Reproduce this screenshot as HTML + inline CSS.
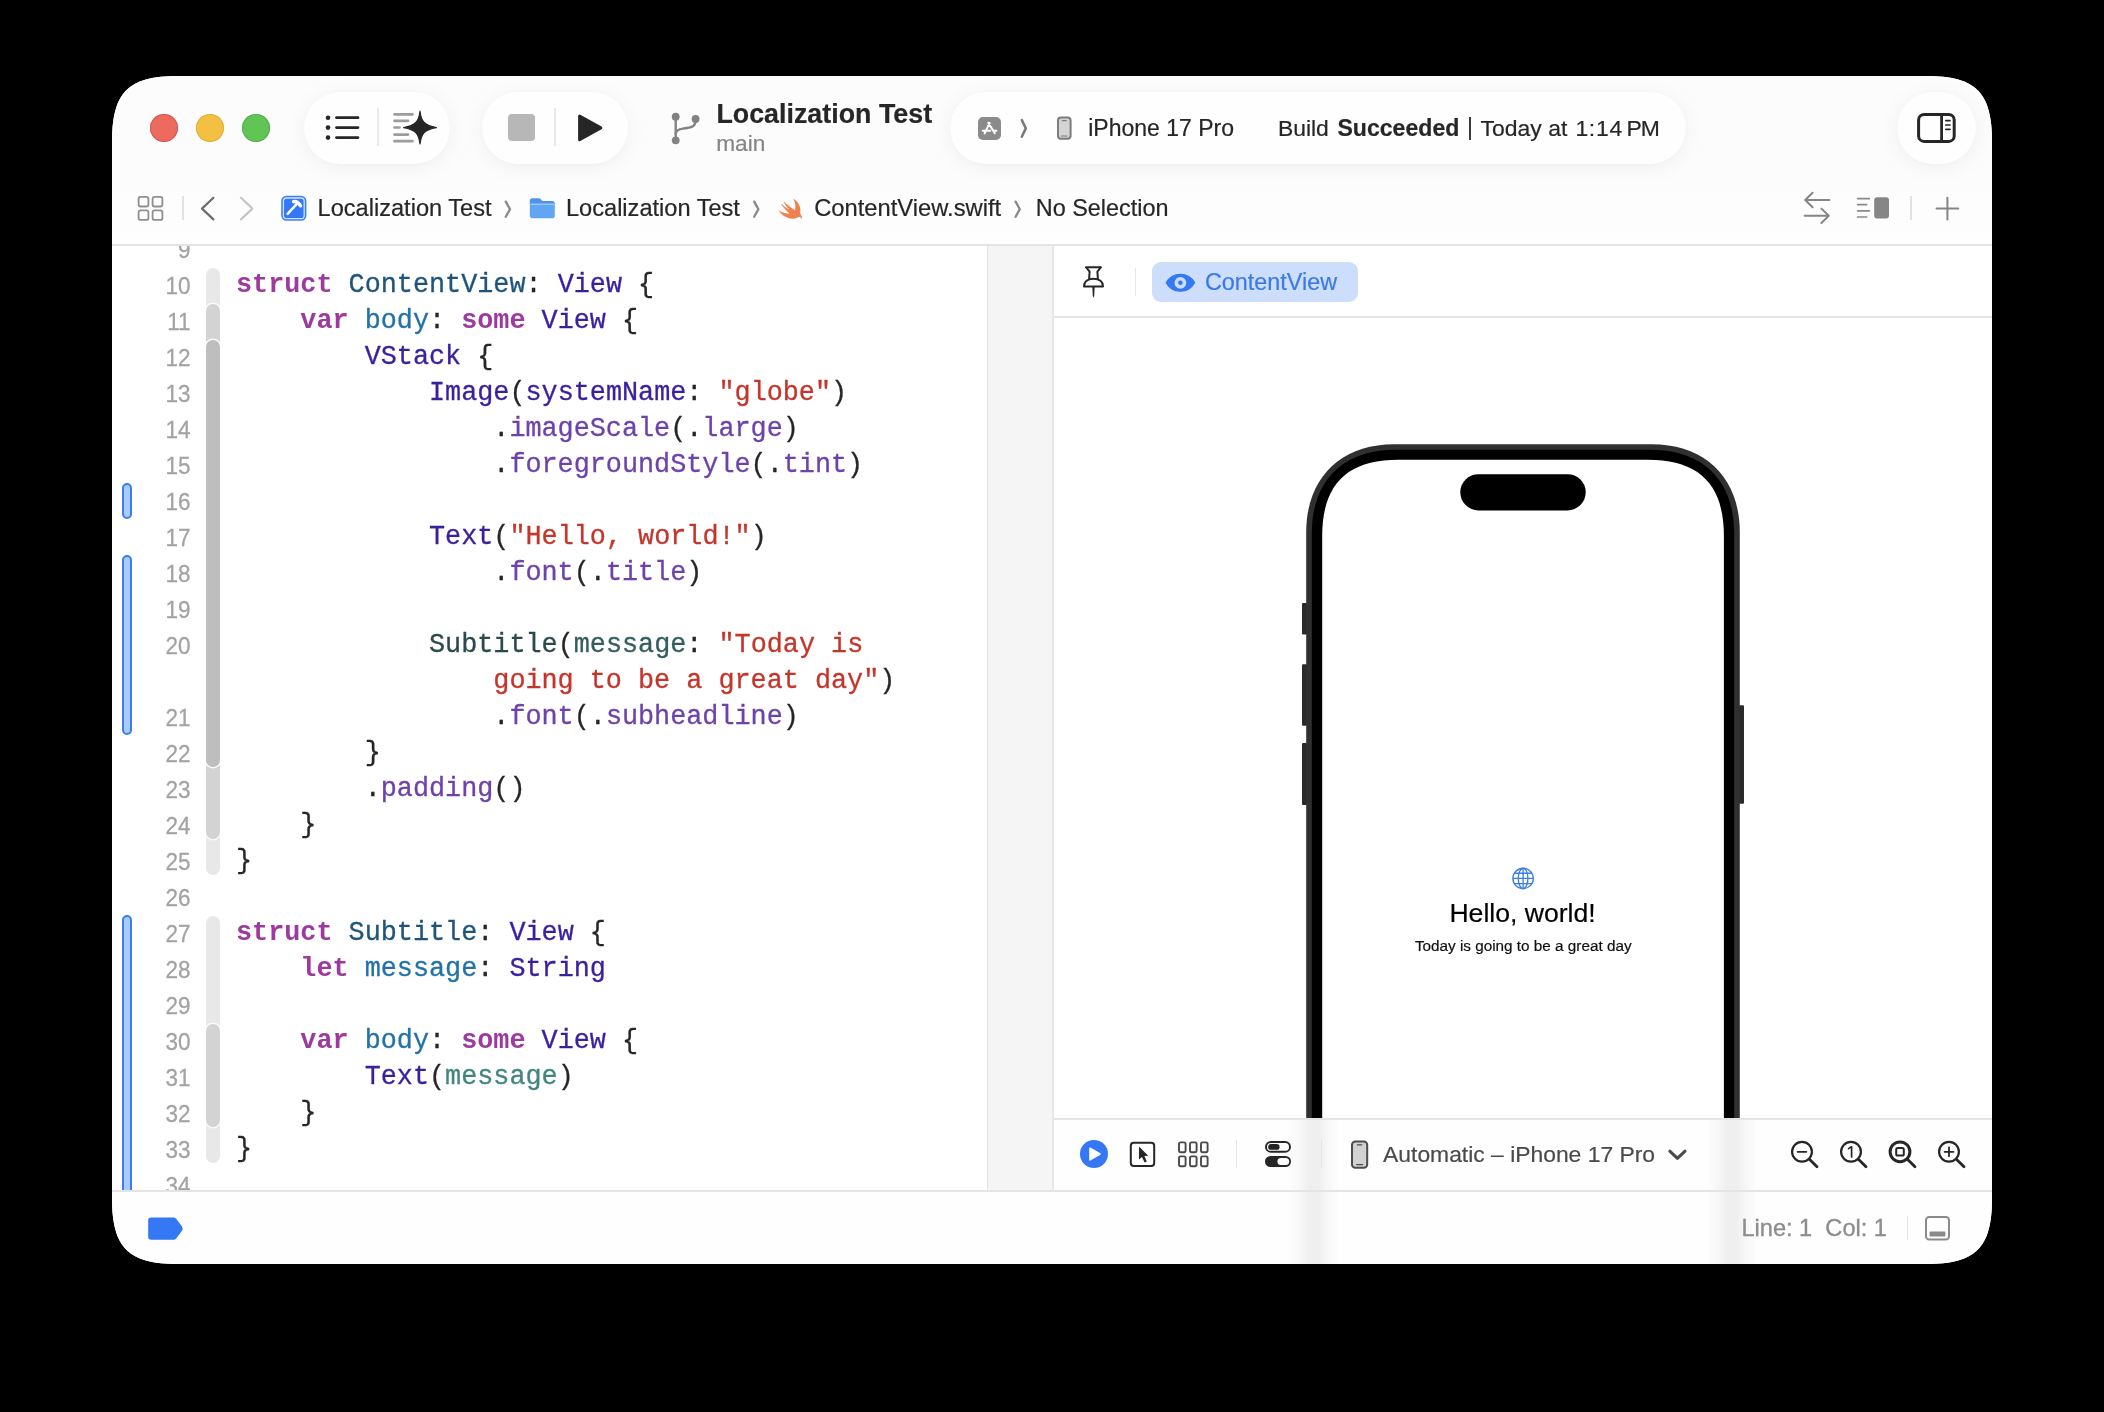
<!DOCTYPE html>
<html>
<head>
<meta charset="utf-8">
<title>Xcode</title>
<style>
html,body{margin:0;padding:0;background:#000;}
body{width:2104px;height:1412px;overflow:hidden;position:relative;font-family:"Liberation Sans",sans-serif;}
.win{position:absolute;left:112px;top:76px;width:1880px;height:1188px;background:#fff;overflow:hidden;clip-path:path('M0 66 C0 16.1 16.1 0 66 0 L1814 0 C1863.9 0 1880 16.1 1880 66 L1880 1122 C1880 1171.9 1863.9 1188 1814 1188 L66 1188 C16.1 1188 0 1171.9 0 1122Z');}
.pg{position:absolute;left:-112px;top:-76px;width:2104px;height:1412px;will-change:transform;}
.pg *{position:absolute;box-sizing:border-box;}
.t{white-space:pre;line-height:30px;height:30px;font-size:23px;color:#262626;-webkit-text-stroke:0.2px currentColor;}
.pill{background:#fefefe;border-radius:36px;box-shadow:0 3px 22px rgba(0,0,0,0.055),0 1px 5px rgba(0,0,0,0.015);}
.vd{width:1.6px;background:#e4e4e4;}
.hl{height:1px;background:#e3e3e3;}
svg{overflow:visible;}
/* code */
.code{left:236px;height:36px;font-family:"Liberation Mono",monospace;font-size:26.8px;line-height:36px;white-space:pre;color:#262626;-webkit-text-stroke:0.3px currentColor;}
.code span{position:static;}
.k{color:#9d3a9e;font-weight:bold;-webkit-text-stroke:0;}
.td{color:#1f557c;}
.od{color:#2272a8;}
.st{color:#3a1f9e;}
.sf{color:#6e42ad;}
.pt{color:#2a4a4d;}
.pp{color:#428580;}
.pp2{color:#335e60;}
.s{color:#c4352a;}
.ln{left:120px;width:70.6px;height:36px;text-align:right;font-size:24.6px;line-height:36px;color:#a3a3a3;-webkit-text-stroke:0.3px #a3a3a3;white-space:pre;transform:scaleX(0.915);transform-origin:100% 50%;}
</style>
</head>
<body>
<div class="win"><div class="pg">

<!-- ===== toolbar background ===== -->
<div style="left:112px;top:76px;width:1880px;height:169px;background:#fcfcfc;"></div>
<div style="left:112px;top:170px;width:1880px;height:75px;background:linear-gradient(#fcfcfc,#fefefe);"></div>

<!-- traffic lights -->
<div style="left:150px;top:114px;width:28px;height:28px;border-radius:50%;background:#ec6a5e;box-shadow:inset 0 0 0 1px rgba(160,40,40,0.35);"></div>
<div style="left:196px;top:114px;width:28px;height:28px;border-radius:50%;background:#f3c041;box-shadow:inset 0 0 0 1px rgba(190,140,20,0.35);"></div>
<div style="left:242px;top:114px;width:28px;height:28px;border-radius:50%;background:#61c554;box-shadow:inset 0 0 0 1px rgba(40,130,40,0.35);"></div>

<!-- pills -->
<div class="pill" style="left:304px;top:92px;width:146px;height:72px;"></div>
<div class="pill" style="left:482px;top:92px;width:146px;height:72px;"></div>
<div class="pill" style="left:950px;top:92px;width:736px;height:72px;"></div>
<div class="pill" style="left:1897px;top:92px;width:79px;height:72px;"></div>

<!-- list icon -->
<svg style="left:320px;top:108px;" width="48" height="40" viewBox="320 108 48 40">
 <g stroke="#262626" stroke-width="2.8" stroke-linecap="round" fill="none">
  <path d="M336.5 117.7H358 M336.5 127.6H358 M336.5 137.6H358"/>
 </g>
 <g fill="#262626"><circle cx="328" cy="117.7" r="2.3"/><circle cx="328" cy="127.6" r="2.3"/><circle cx="328" cy="137.6" r="2.3"/></g>
</svg>
<div class="vd" style="left:377px;top:108px;height:38px;background:#e9e9e9;"></div>
<!-- sparkle text icon -->
<svg style="left:390px;top:108px;" width="50" height="40" viewBox="390 108 50 40">
 <g stroke="#9c9c9c" stroke-width="2.7" stroke-linecap="round" fill="none">
  <path d="M394.5 114.3H412.5 M394.5 120.9H408 M394.5 127.5H399.5 M394.5 134.6H408 M394.5 141.2H412.5"/>
 </g>
 <path fill="#262626" stroke="#262626" stroke-width="1.2" stroke-linejoin="round" d="M420 111.2 C421.2 121.5 424.5 125.6 436.4 127.6 C424.5 129.6 421.2 133.7 420 144 C418.8 133.7 415.5 129.6 403.6 127.6 C415.5 125.6 418.8 121.5 420 111.2Z"/>
</svg>
<!-- stop / play -->
<div style="left:508px;top:114px;width:27px;height:27px;border-radius:4px;background:#b7b7b7;"></div>
<div class="vd" style="left:554px;top:108px;height:38px;background:#e9e9e9;"></div>
<svg style="left:574px;top:110px;" width="34" height="36" viewBox="574 110 34 36">
 <path fill="#262626" stroke="#262626" stroke-width="3" stroke-linejoin="round" d="M579.6 116 L600.8 127.9 L579.6 139.8Z"/>
</svg>
<!-- branch icon -->
<svg style="left:668px;top:108px;" width="36" height="40" viewBox="668 108 36 40">
 <g fill="none" stroke="#828282" stroke-width="2.4" stroke-linecap="round">
  <path d="M675.7 117V140"/>
  <path d="M695.6 120 C695.6 127.5 690 127.8 683 128.6 C678.5 129.2 675.7 130.6 675.7 134"/>
 </g>
 <g fill="#828282"><circle cx="675.7" cy="116.7" r="3.9"/><circle cx="695.6" cy="119" r="3.9"/><circle cx="675.7" cy="140.3" r="3.9"/></g>
</svg>
<div class="t" style="left:716.4px;top:98.7px;font-size:26.8px;font-weight:bold;color:#262626;letter-spacing:0.02px;">Localization Test</div>
<div class="t" style="left:716.2px;top:127.9px;font-size:22.7px;color:#858585;">main</div>
<!-- scheme -->
<svg style="left:978px;top:117px;" width="23" height="23" viewBox="0 0 23 23">
 <rect x="0" y="0" width="23" height="23" rx="5" fill="#8b8b8b"/>
 <g stroke="#fff" stroke-width="2" stroke-linecap="round" fill="none">
  <path d="M11.7 5.8 L6.6 16.4 M10.3 5.8 L16.8 16.2 M4.8 13.7H12.2 M15.8 13.7H18.4"/>
 </g>
</svg>
<svg style="left:1018px;top:116px;" width="14" height="24" viewBox="1018 116 14 24">
 <path d="M1021.8 120 L1025.8 128.4 L1021.8 136.8" fill="none" stroke="#787878" stroke-width="2.5" stroke-linecap="round" stroke-linejoin="round"/>
</svg>
<svg style="left:1055px;top:114px;" width="20" height="28" viewBox="1055 114 20 28">
 <rect x="1058" y="117.5" width="12.6" height="21.2" rx="3" fill="#d4d4d4" stroke="#7c7c7c" stroke-width="2"/>
 <path d="M1062.3 120.6H1066.3 M1061.6 136H1067" stroke="#7c7c7c" stroke-width="1.2" stroke-linecap="round"/>
</svg>
<div class="t" style="left:1088.2px;top:113px;font-size:23px;">iPhone 17 Pro</div>
<div class="t" style="left:1277.9px;top:113px;font-size:22.9px;">Build</div>
<div class="t" style="left:1337.4px;top:113px;font-size:23.1px;font-weight:bold;">Succeeded</div>
<div style="left:1469px;top:117px;width:1.6px;height:23px;background:#3a3a3a;"></div>
<div class="t" style="left:1480.6px;top:113px;font-size:22.95px;">Today at</div>
<div class="t" style="left:1575.4px;top:113px;font-size:22.95px;letter-spacing:0.7px;">1:14</div>
<div class="t" style="left:1626.6px;top:113px;font-size:22.95px;letter-spacing:-1.1px;">PM</div>
<!-- inspector icon -->
<svg style="left:1914px;top:110px;" width="46" height="36" viewBox="1914 110 46 36">
 <rect x="1918.6" y="114.4" width="35.6" height="27" rx="5.5" fill="none" stroke="#262626" stroke-width="3"/>
 <path d="M1941.6 114.4V141.4" stroke="#262626" stroke-width="2.8"/>
 <path d="M1945.8 120.6H1950 M1945.8 125H1950 M1945.8 129.3H1950" stroke="#262626" stroke-width="1.7" stroke-linecap="round"/>
</svg>


<!-- grid icon -->
<svg style="left:136px;top:194px;" width="30" height="30" viewBox="136 194 30 30">
 <g fill="none" stroke="#8f8f8f" stroke-width="1.8">
  <rect x="138.6" y="196.9" width="9.8" height="9.6" rx="2"/><rect x="152.6" y="196.9" width="9.8" height="9.6" rx="2"/>
  <rect x="138.6" y="210.3" width="9.8" height="9.6" rx="2"/><rect x="152.6" y="210.3" width="9.8" height="9.6" rx="2"/>
 </g>
</svg>
<div class="vd" style="left:182px;top:196px;height:24px;background:#e2e2e2;"></div>
<svg style="left:198px;top:194px;" width="60" height="30" viewBox="198 194 60 30">
 <path d="M213.4 197.8 L202 208.6 L213.4 219.4" fill="none" stroke="#6c6c6c" stroke-width="2.2" stroke-linecap="round" stroke-linejoin="round"/>
 <path d="M241 197.8 L252.4 208.6 L241 219.4" fill="none" stroke="#c6c6c6" stroke-width="2.2" stroke-linecap="round" stroke-linejoin="round"/>
</svg>
<!-- project icon -->
<svg style="left:280px;top:194px;" width="28" height="28" viewBox="280 194 28 28">
 <rect x="281.2" y="195.8" width="25.2" height="25" rx="5.2" fill="#3b80ef"/>
 <rect x="283.4" y="198" width="20.8" height="20.6" rx="3.2" fill="#3478f6" stroke="#cfe1fd" stroke-width="1.3"/>
 <path d="M287.6 213.8 L296.8 203.8" stroke="#fff" stroke-width="2.5" stroke-linecap="round"/>
 <path d="M293.4 201.6 C295.6 201.2 298.6 202.6 300.6 205.8" stroke="#fff" stroke-width="3.3" stroke-linecap="round" fill="none"/>
</svg>
<div class="t" style="left:317.6px;top:193px;font-size:23.59px;">Localization Test</div>
<svg style="left:502px;top:198px;" width="12" height="22" viewBox="502 198 12 22"><path d="M505.8 201.6 L510 209.2 L505.8 216.8" fill="none" stroke="#888" stroke-width="2.3" stroke-linecap="round" stroke-linejoin="round"/></svg>
<!-- folder -->
<svg style="left:528px;top:196px;" width="28" height="24" viewBox="528 196 28 24">
 <path d="M529.8 201 Q529.8 198.2 532.6 198.2 H538.6 Q540 198.2 540.8 199.2 L541.8 200.4 Q542.4 201 543.4 201 H552 Q554.8 201 554.8 203.8 V204 H529.8Z" fill="#4c93ea"/>
  <path d="M529.8 203.6 H554.8 V215.4 Q554.8 218.2 552 218.2 H532.6 Q529.8 218.2 529.8 215.4Z" fill="#62a6f3"/>
 <path d="M530.4 204.2H554.2" stroke="#b5d5fa" stroke-width="1"/>
</svg>
<div class="t" style="left:566px;top:193px;font-size:23.59px;">Localization Test</div>
<svg style="left:750px;top:198px;" width="12" height="22" viewBox="750 198 12 22"><path d="M754.2 201.6 L758.4 209.2 L754.2 216.8" fill="none" stroke="#888" stroke-width="2.3" stroke-linecap="round" stroke-linejoin="round"/></svg>
<!-- swift bird -->
<svg style="left:777px;top:196px;" width="28" height="26" viewBox="0 0 28 26">
 <path fill="#f0814e" d="M16.2 2.4 C21.8 6 24.6 12 23 17.2 C24.8 19.4 25.4 21.6 25 22.8 C23.6 20.6 21.8 20.8 20.6 21.4 C17.6 23.2 12.6 23.2 8.4 20.8 C5.4 19.2 3 16.6 1.4 14 C4.6 16.4 8.6 18 12.6 17.4 C8.6 14.2 5.4 10.4 3.6 7.2 C6.2 9.6 10 12.4 12.4 13.8 C9.6 10.8 7.4 7.4 6.2 5 C9.6 8.4 14.2 12 18 14.2 C19 10.6 18.4 6.2 16.2 2.4Z"/>
</svg>
<div class="t" style="left:814.2px;top:193px;font-size:23.75px;">ContentView.swift</div>
<svg style="left:1011px;top:198px;" width="12" height="22" viewBox="1011 198 12 22"><path d="M1015.6 201.6 L1019.8 209.2 L1015.6 216.8" fill="none" stroke="#888" stroke-width="2.3" stroke-linecap="round" stroke-linejoin="round"/></svg>
<div class="t" style="left:1035.8px;top:193px;font-size:23.4px;">No Selection</div>
<!-- right icons -->
<svg style="left:1800px;top:190px;" width="34" height="36" viewBox="1800 190 34 36">
 <g fill="none" stroke="#858585" stroke-width="2" stroke-linecap="round" stroke-linejoin="round">
  <path d="M1829.4 200H1805.4 M1812.6 192.8 L1805.2 200 L1812.6 207.2"/>
  <path d="M1804.6 215.8H1828.6 M1821.4 208.6 L1828.8 215.8 L1821.4 223"/>
 </g>
</svg>
<svg style="left:1855px;top:195px;" width="36" height="26" viewBox="1855 195 36 26">
 <path d="M1857.6 198.6H1869.4 M1857.6 204.6H1866.6 M1857.6 210.8H1869.4 M1857.6 217H1866.6" stroke="#8a8a8a" stroke-width="1.7" stroke-linecap="round"/>
 <rect x="1874.2" y="197.2" width="14.8" height="21.4" rx="3" fill="#868686"/>
</svg>
<div class="vd" style="left:1910px;top:196px;height:24px;background:#e2e2e2;"></div>
<svg style="left:1934px;top:195px;" width="28" height="28" viewBox="1934 195 28 28">
 <path d="M1936.6 208.6H1958.2 M1947.4 197.8V219.4" stroke="#858585" stroke-width="2" stroke-linecap="round"/>
</svg>


<!-- ===== separators / panes ===== -->
<div style="left:112px;top:245px;width:1880px;height:946px;background:#fff;"></div>
<div class="hl" style="left:112px;top:244px;width:1880px;height:2px;background:#e4e4e4;"></div>

<div style="left:112px;top:246px;width:875px;height:944px;overflow:hidden;"><div style="left:-112px;top:-246px;width:2104px;height:1412px;">
<div style="left:122px;top:482.7px;width:10px;height:36.0px;border-radius:5px;background:#a9ccfb;border:2px solid #3b7df0;"></div>
<div style="left:122px;top:554.7px;width:10px;height:180.0px;border-radius:5px;background:#a9ccfb;border:2px solid #3b7df0;"></div>
<div style="left:122px;top:914.7px;width:10px;height:324.0px;border-radius:5px;background:#a9ccfb;border:2px solid #3b7df0;"></div>
<div style="left:206px;top:246px;width:14px;height:944px;overflow:hidden;"><div style="left:-206px;top:-246px;width:300px;height:1412px;">
<div style="left:206px;top:268.3px;width:14px;height:607.0px;border-radius:7px;background:#e8e8e8;"></div>
<div style="left:206px;top:304.3px;width:14px;height:535.0px;border-radius:7px;background:#d3d3d3;box-shadow:0 0 0 1.5px #fafafa;"></div>
<div style="left:206px;top:340.3px;width:14px;height:427.0px;border-radius:7px;background:#bebebe;box-shadow:0 0 0 1.5px #fafafa;"></div>
<div style="left:206px;top:916.3px;width:14px;height:247.0px;border-radius:7px;background:#e8e8e8;"></div>
<div style="left:206px;top:1024.3px;width:14px;height:103.0px;border-radius:7px;background:#d3d3d3;box-shadow:0 0 0 1.5px #fafafa;"></div>
</div></div>
<div class="ln" style="top:231.7px;">9</div>
<div class="ln" style="top:267.7px;">10</div>
<div class="ln" style="top:303.7px;">11</div>
<div class="ln" style="top:339.7px;">12</div>
<div class="ln" style="top:375.7px;">13</div>
<div class="ln" style="top:411.7px;">14</div>
<div class="ln" style="top:447.7px;">15</div>
<div class="ln" style="top:483.7px;">16</div>
<div class="ln" style="top:519.7px;">17</div>
<div class="ln" style="top:555.7px;">18</div>
<div class="ln" style="top:591.7px;">19</div>
<div class="ln" style="top:627.7px;">20</div>
<div class="ln" style="top:699.7px;">21</div>
<div class="ln" style="top:735.7px;">22</div>
<div class="ln" style="top:771.7px;">23</div>
<div class="ln" style="top:807.7px;">24</div>
<div class="ln" style="top:843.7px;">25</div>
<div class="ln" style="top:879.7px;">26</div>
<div class="ln" style="top:915.7px;">27</div>
<div class="ln" style="top:951.7px;">28</div>
<div class="ln" style="top:987.7px;">29</div>
<div class="ln" style="top:1023.7px;">30</div>
<div class="ln" style="top:1059.7px;">31</div>
<div class="ln" style="top:1095.7px;">32</div>
<div class="ln" style="top:1131.7px;">33</div>
<div class="ln" style="top:1167.7px;">34</div>
<div class="code" style="top:266.7px;"><span class="k">struct</span> <span class="td">ContentView</span>: <span class="st">View</span> {</div>
<div class="code" style="top:302.7px;">    <span class="k">var</span> <span class="od">body</span>: <span class="k">some</span> <span class="st">View</span> {</div>
<div class="code" style="top:338.7px;">        <span class="st">VStack</span> {</div>
<div class="code" style="top:374.7px;">            <span class="st">Image</span>(<span class="st">systemName</span>: <span class="s">"globe"</span>)</div>
<div class="code" style="top:410.7px;">                .<span class="sf">imageScale</span>(.<span class="sf">large</span>)</div>
<div class="code" style="top:446.7px;">                .<span class="sf">foregroundStyle</span>(.<span class="sf">tint</span>)</div>
<div class="code" style="top:518.7px;">            <span class="st">Text</span>(<span class="s">"Hello, world!"</span>)</div>
<div class="code" style="top:554.7px;">                .<span class="sf">font</span>(.<span class="sf">title</span>)</div>
<div class="code" style="top:626.7px;">            <span class="pt">Subtitle</span>(<span class="pp2">message</span>: <span class="s">"Today is</span></div>
<div class="code" style="top:662.7px;">                <span class="s">going to be a great day"</span>)</div>
<div class="code" style="top:698.7px;">                .<span class="sf">font</span>(.<span class="sf">subheadline</span>)</div>
<div class="code" style="top:734.7px;">        }</div>
<div class="code" style="top:770.7px;">        .<span class="sf">padding</span>()</div>
<div class="code" style="top:806.7px;">    }</div>
<div class="code" style="top:842.7px;">}</div>
<div class="code" style="top:914.7px;"><span class="k">struct</span> <span class="td">Subtitle</span>: <span class="st">View</span> {</div>
<div class="code" style="top:950.7px;">    <span class="k">let</span> <span class="od">message</span>: <span class="st">String</span></div>
<div class="code" style="top:1022.7px;">    <span class="k">var</span> <span class="od">body</span>: <span class="k">some</span> <span class="st">View</span> {</div>
<div class="code" style="top:1058.7px;">        <span class="st">Text</span>(<span class="pp">message</span>)</div>
<div class="code" style="top:1094.7px;">    }</div>
<div class="code" style="top:1130.7px;">}</div>
</div></div>


<!-- middle gutter -->
<div style="left:987px;top:246px;width:67px;height:945px;background:#f5f5f5;border-left:1px solid #e2e2e2;border-right:2px solid #e6e6e6;"></div>

<!-- canvas -->
<div style="left:1054px;top:246px;width:938px;height:945px;background:#fff;"></div>
<svg style="left:1078px;top:262px;" width="32" height="40" viewBox="1078 262 32 40">
 <g fill="none" stroke="#262626" stroke-width="2" stroke-linecap="round" stroke-linejoin="round">
  <path d="M1086 267.2H1101 L1097.4 271.6 L1097.9 278.9 M1086 267.2 L1089.6 271.6 L1089.1 278.9"/>
  <path d="M1084 286.4 C1084 281.8 1087.6 278.8 1093.5 278.8 C1099.4 278.8 1103 281.8 1103 286.4Z"/>
 </g>
 <path d="M1092.3 287 H1094.7 L1094.2 295.4 L1093.5 298 L1092.8 295.4Z" fill="#262626"/>
</svg>
<div class="vd" style="left:1134.5px;top:268px;height:28px;background:#e8e8e8;"></div>
<div style="left:1152px;top:262px;width:206px;height:40px;border-radius:9px;background:#cddefc;"></div>
<svg style="left:1164px;top:272px;" width="32" height="22" viewBox="1164 272 32 22">
 <path d="M1166.2 282.8 C1169.4 277 1174.4 274.4 1180.4 274.4 C1186.4 274.4 1191.4 277 1194.6 282.8 C1191.4 288.6 1186.4 291.2 1180.4 291.2 C1174.4 291.2 1169.4 288.6 1166.2 282.8Z" fill="#3478f6" stroke="#3478f6" stroke-width="1.2" stroke-linejoin="round"/>
 <circle cx="1180.4" cy="282.8" r="5.9" fill="#cddefc"/>
 <circle cx="1180.4" cy="282.8" r="2.3" fill="#3478f6"/>
</svg>
<div class="t" style="left:1205px;top:267px;font-size:23.36px;color:#3b7ae6;">ContentView</div>
<div class="hl" style="left:1054px;top:315.5px;width:938px;height:2px;background:#e6e6e6;"></div>
<div style="left:1054px;top:318px;width:938px;height:800px;overflow:hidden;"><div style="left:-1054px;top:-318px;width:2104px;height:1412px;">
<svg style="left:1290px;top:430px;" width="470" height="720" viewBox="1290 430 470 720">
<g fill="#2b2b2b"><rect x="1302" y="603" width="5" height="31.5" rx="1"/><rect x="1302" y="664.3" width="5" height="61.4" rx="1"/><rect x="1302" y="743" width="5" height="61.9" rx="1"/><rect x="1739" y="705.3" width="5" height="98.5" rx="1"/></g>
<path d="M1306.2 1150 L1306.2 532.20 C1306.2 478.30 1340.30 444.2 1394.20 444.2 L1651.80 444.2 C1705.70 444.2 1739.8 478.30 1739.8 532.20 L1739.8 1150Z" fill="#303030"/>
<path d="M1311.8 1150 L1311.8 533.80 C1311.8 480.60 1342.60 449.8 1395.80 449.8 L1650.20 449.8 C1703.40 449.8 1734.2 480.60 1734.2 533.80 L1734.2 1150Z" fill="#000"/>
<path d="M1322.2 1150 L1322.2 536.30 C1322.2 484.40 1346.80 459.8 1398.70 459.8 L1647.40 459.8 C1699.30 459.8 1723.9 484.40 1723.9 536.30 L1723.9 1150Z" fill="#fff"/>
<rect x="1460.3" y="474.2" width="125.4" height="36.2" rx="18.1" fill="#000"/>
<g fill="none" stroke="#3c80e0" stroke-width="1.35">
 <circle cx="1523.1" cy="878.4" r="10.2"/>
 <ellipse cx="1523.1" cy="878.4" rx="4.8" ry="10.2"/>
 <path d="M1523.1 868.2V888.6 M1512.9 878.4H1533.3 M1514.4 873.2H1531.8 M1514.4 883.6H1531.8"/>
</g>
</svg>
<div class="t" style="left:1449.4px;top:898.3px;font-size:26.6px;color:#000;">Hello, world!</div>
<div class="t" style="left:1414.9px;top:930.7px;font-size:15.29px;color:#111;">Today is going to be a great day</div>
</div></div>
<div style="left:1054px;top:1118px;width:938px;height:73px;background:#fefefe;"></div>
<div class="hl" style="left:1054px;top:1117.8px;width:938px;height:1.8px;background:#e4e4e4;"></div>


<!-- status bar -->
<div style="left:112px;top:1190px;width:1880px;height:74px;background:#fefefe;"></div>
<div class="hl" style="left:112px;top:1190px;width:1880px;height:2px;background:#e4e4e4;"></div>

<div style="left:1289px;top:1119.6px;width:50px;height:145px;background:linear-gradient(90deg,rgba(0,0,0,0) 0%,rgba(0,0,0,0.03) 25%,rgba(0,0,0,0.06) 40%,rgba(0,0,0,0.06) 60%,rgba(0,0,0,0.03) 75%,rgba(0,0,0,0) 100%);"></div>
<div style="left:1707px;top:1119.6px;width:50px;height:145px;background:linear-gradient(90deg,rgba(0,0,0,0) 0%,rgba(0,0,0,0.03) 25%,rgba(0,0,0,0.06) 40%,rgba(0,0,0,0.06) 60%,rgba(0,0,0,0.03) 75%,rgba(0,0,0,0) 100%);"></div>
<div class="hl" style="left:112px;top:1190.2px;width:1880px;height:1.8px;background:#e4e4e4;"></div>
<svg style="left:1078px;top:1138px;" width="32" height="32" viewBox="1078 1138 32 32">
 <circle cx="1094" cy="1154" r="14" fill="#3478f6"/>
 <path d="M1090 1148.2 L1100 1154 L1090 1159.8Z" fill="#fff" stroke="#fff" stroke-width="1.6" stroke-linejoin="round"/>
</svg>
<svg style="left:1128px;top:1139px;" width="30" height="30" viewBox="1128 1139 30 30">
 <rect x="1130.8" y="1142.8" width="23.4" height="23.2" rx="3" fill="none" stroke="#262626" stroke-width="2"/>
 <path d="M1139 1146.6 L1139 1159.6 L1142 1157 L1144.6 1162.4 L1146.8 1161.4 L1144.4 1156 L1148.2 1155.8Z" fill="#262626"/>
</svg>
<svg style="left:1176px;top:1139px;" width="36" height="30" viewBox="1176 1139 36 30"><g fill="none" stroke="#4a4a4a" stroke-width="1.9"><rect x="1179" y="1142.4" width="6.6" height="9.8" rx="1.6"/><rect x="1190" y="1142.4" width="6.6" height="9.8" rx="1.6"/><rect x="1201" y="1142.4" width="6.6" height="9.8" rx="1.6"/><rect x="1179" y="1156.4" width="6.6" height="9.8" rx="1.6"/><rect x="1190" y="1156.4" width="6.6" height="9.8" rx="1.6"/><rect x="1201" y="1156.4" width="6.6" height="9.8" rx="1.6"/></g></svg>
<div class="vd" style="left:1235.5px;top:1140px;height:28px;background:#e6e6e6;"></div>
<svg style="left:1262px;top:1138px;" width="32" height="32" viewBox="1262 1138 32 32">
 <rect x="1266" y="1142" width="24" height="9.8" rx="4.9" fill="none" stroke="#262626" stroke-width="2"/>
 <rect x="1268.2" y="1144" width="11.4" height="5.8" rx="2.9" fill="#262626"/>
 <rect x="1265" y="1156" width="26" height="11" rx="5.5" fill="#262626"/>
 <rect x="1277.4" y="1158" width="11.8" height="7" rx="3.5" fill="#fff"/>
</svg>
<div class="vd" style="left:1320.5px;top:1140px;height:28px;background:#e4e4e4;"></div>
<svg style="left:1349px;top:1138px;" width="22" height="34" viewBox="1349 1138 22 34">
 <rect x="1352" y="1141.4" width="15.2" height="26.4" rx="3.4" fill="#d2d2d2" stroke="#4c4c4c" stroke-width="2"/>
 <path d="M1357.4 1144.8H1361.8 M1356.6 1164.6H1362.6" stroke="#4c4c4c" stroke-width="1.3" stroke-linecap="round"/>
</svg>
<div class="t" style="left:1383.1px;top:1138.5px;font-size:22.86px;color:#4a4a4a;">Automatic – iPhone 17 Pro</div>
<svg style="left:1665px;top:1146px;" width="26" height="18" viewBox="1665 1146 26 18"><path d="M1669.8 1151.2 L1677.4 1158.4 L1685 1151.2" fill="none" stroke="#4a4a4a" stroke-width="3" stroke-linecap="round" stroke-linejoin="round"/></svg>
<svg style="left:1788px;top:1138px;" width="34" height="34" viewBox="1788 1138 34 34">
 <circle cx="1802" cy="1151.8" r="9.9" fill="none" stroke="#262626" stroke-width="2.2"/>
 <path d="M1809.4 1159.2 L1817 1166.8" stroke="#262626" stroke-width="2.8" stroke-linecap="round"/>
 <path d="M1797.6 1151.8H1806.4" stroke="#262626" stroke-width="1.8" stroke-linecap="round"/>
</svg>
<svg style="left:1837px;top:1138px;" width="34" height="34" viewBox="1837 1138 34 34">
 <circle cx="1851" cy="1151.8" r="9.9" fill="none" stroke="#262626" stroke-width="2.2"/>
 <path d="M1858.4 1159.2 L1866 1166.8" stroke="#262626" stroke-width="2.8" stroke-linecap="round"/>
 <path d="M1848.6 1148.6 L1851.6 1146.6 V1157" fill="none" stroke="#262626" stroke-width="1.7" stroke-linecap="round" stroke-linejoin="round"/>
</svg>
<svg style="left:1886px;top:1138px;" width="34" height="34" viewBox="1886 1138 34 34">
 <circle cx="1900" cy="1151.8" r="9.9" fill="none" stroke="#262626" stroke-width="3"/>
 <path d="M1907.4 1159.2 L1915 1166.8" stroke="#262626" stroke-width="2.8" stroke-linecap="round"/>
 <rect x="1896.2" y="1148" width="7.6" height="7.6" rx="1.6" fill="none" stroke="#262626" stroke-width="2"/>
</svg>
<svg style="left:1935px;top:1138px;" width="34" height="34" viewBox="1935 1138 34 34">
 <circle cx="1949" cy="1151.8" r="9.9" fill="none" stroke="#262626" stroke-width="2.2"/>
 <path d="M1956.4 1159.2 L1964 1166.8" stroke="#262626" stroke-width="2.8" stroke-linecap="round"/>
 <path d="M1944.6 1151.8H1953.4 M1949 1147.4V1156.2" stroke="#262626" stroke-width="1.8" stroke-linecap="round"/>
</svg>
<svg style="left:146px;top:1215px;" width="40" height="28" viewBox="146 1215 40 28">
 <path d="M151 1217.6 H173.4 Q175 1217.6 176.2 1218.8 L182 1226.6 Q183.2 1228.7 182 1230.8 L176.2 1238.6 Q175 1239.8 173.4 1239.8 H151 Q148.2 1239.8 148.2 1237 V1220.4 Q148.2 1217.6 151 1217.6Z" fill="#3478f6"/>
</svg>
<div class="t" style="left:1741.4px;top:1213px;font-size:23.6px;color:#8d8d8d;-webkit-text-stroke:0.35px #8d8d8d;">Line: 1  Col: 1</div>
<div class="vd" style="left:1906.5px;top:1216px;height:24px;background:#e4e4e4;"></div>
<svg style="left:1922px;top:1213px;" width="32" height="32" viewBox="1922 1213 32 32">
 <rect x="1926" y="1217" width="23" height="22.6" rx="3.2" fill="none" stroke="#8a8a8a" stroke-width="2"/>
 <rect x="1929.6" y="1231.6" width="15.8" height="5" rx="0.8" fill="#8a8a8a"/>
</svg>


</div></div>
</body>
</html>
